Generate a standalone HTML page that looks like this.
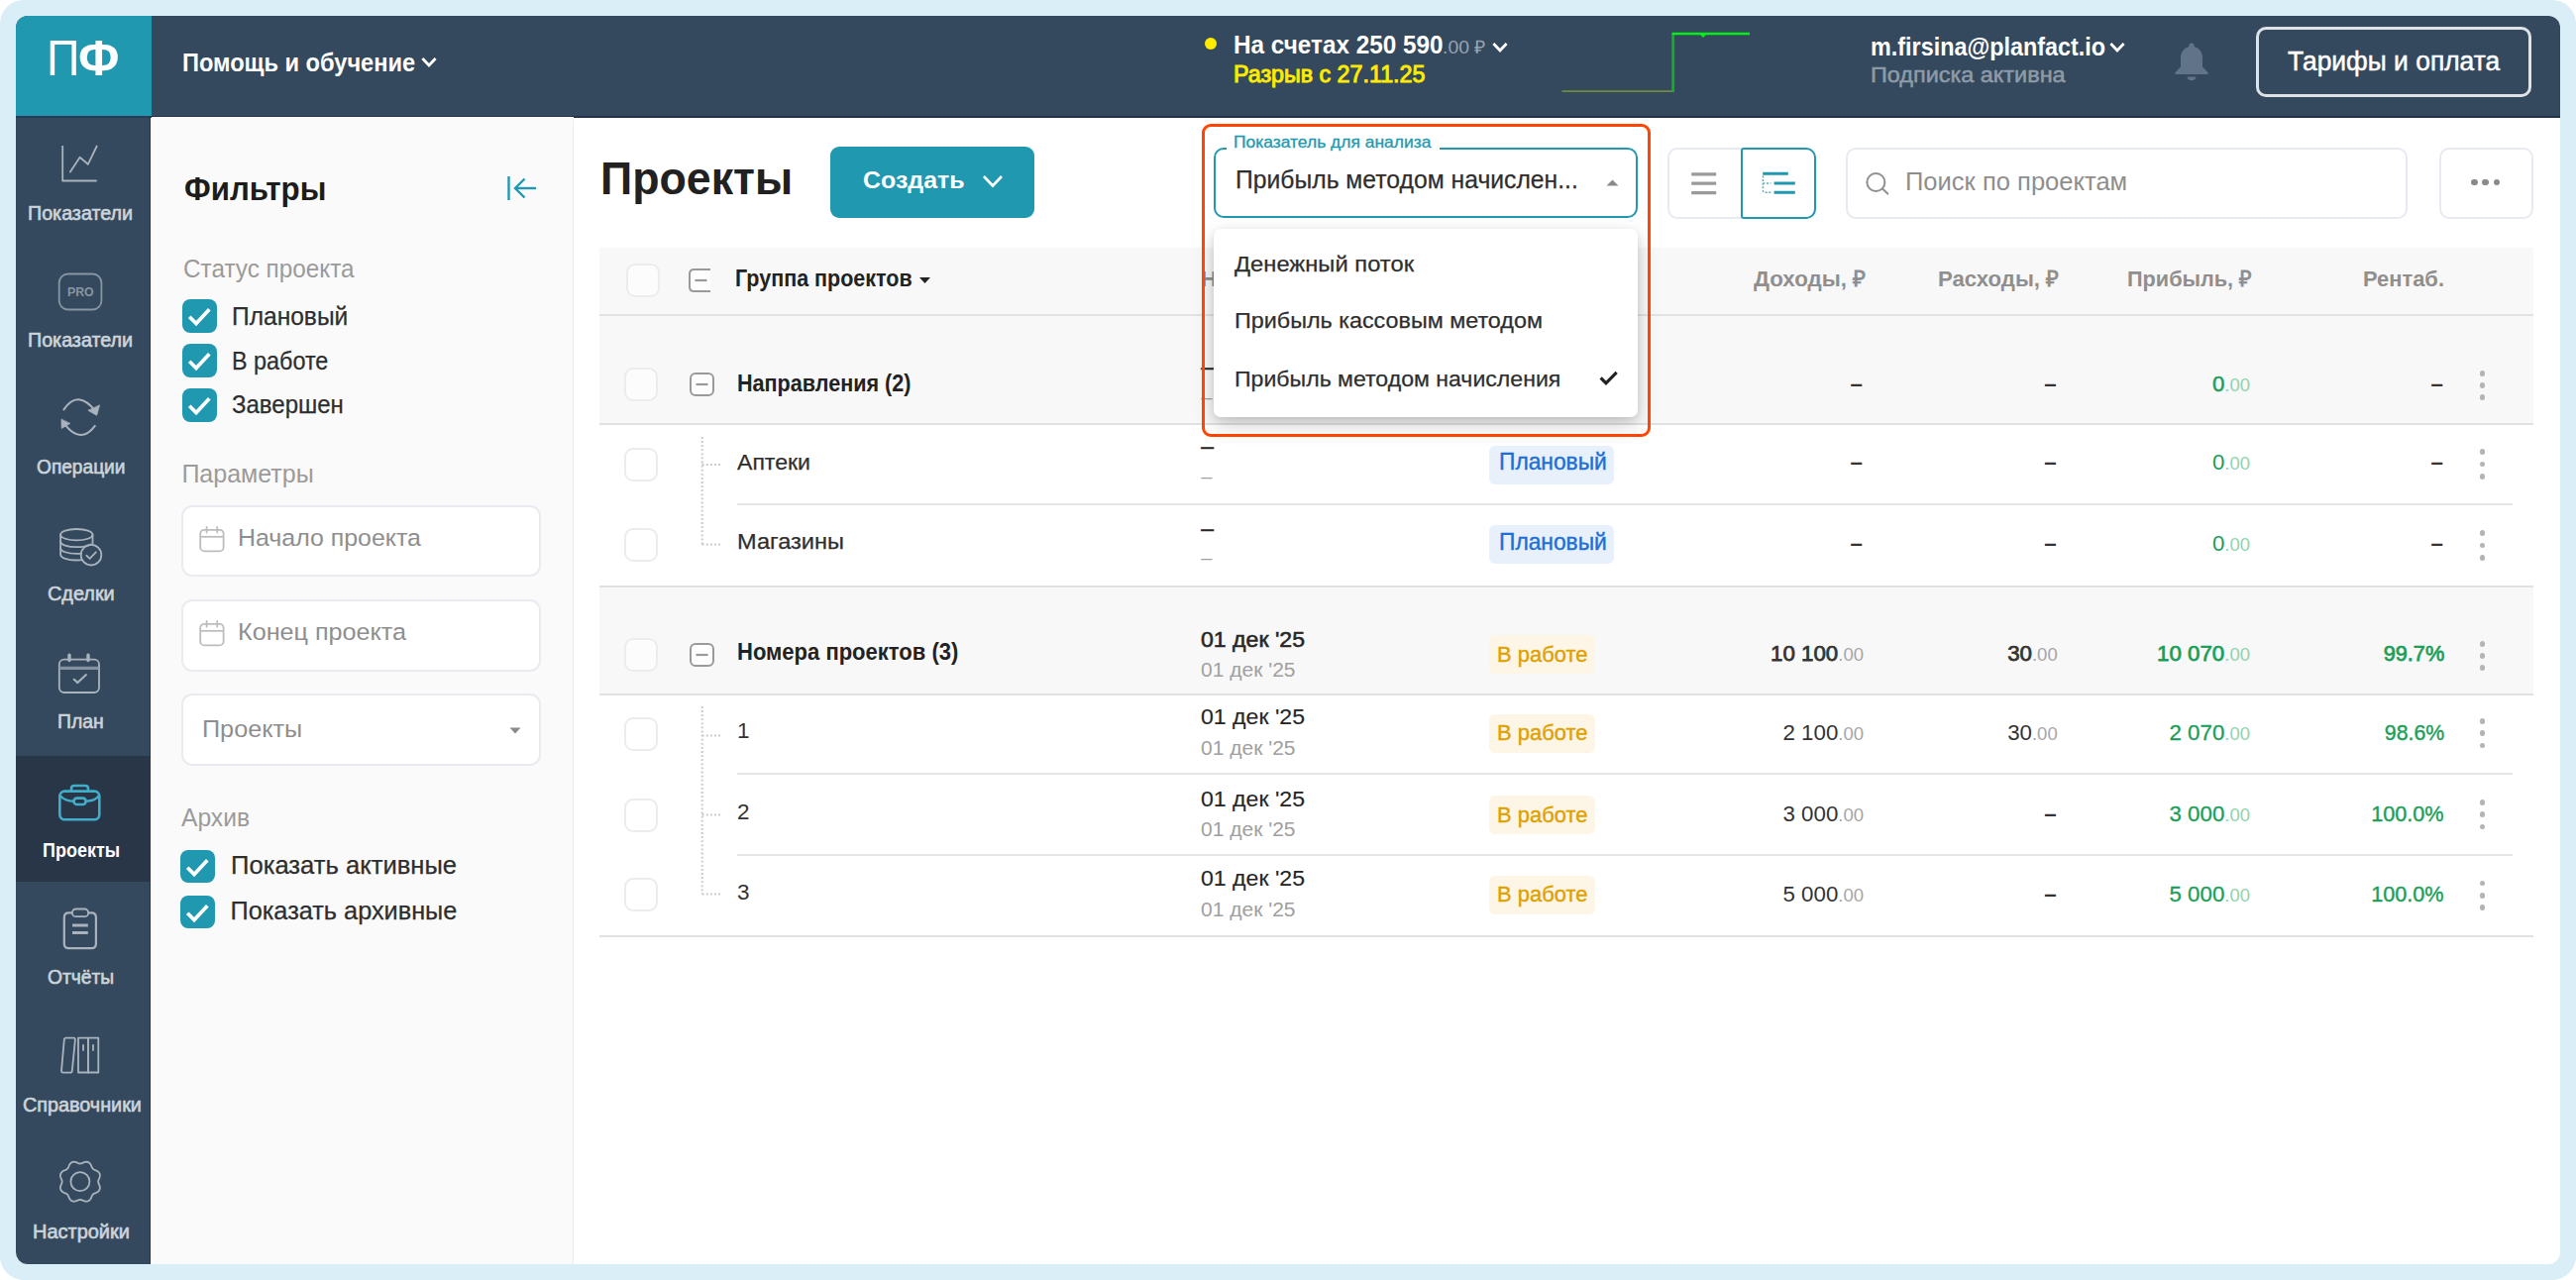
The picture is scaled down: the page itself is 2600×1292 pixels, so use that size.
<!DOCTYPE html>
<html lang="ru"><head><meta charset="utf-8"><title>Проекты</title>
<style>
*{box-sizing:border-box;margin:0;padding:0}
html,body{width:2600px;height:1292px;overflow:hidden;background:#fff}
body{font-family:"Liberation Sans",sans-serif;position:relative}
.t{position:absolute;white-space:nowrap;line-height:1;display:block}
.b{position:absolute}
svg{position:absolute;overflow:visible}
#frame{position:absolute;left:0;top:0;width:2600px;height:1292px;background:#d9eef6;border-radius:24px}
#app{position:absolute;left:16px;top:16px;width:2568px;height:1260px;background:#fff;border-radius:12px}
.cb{position:absolute;width:33px;height:33px;border-radius:9px;background:rgba(255,255,255,.55);border:2px solid #ececec}
.cbk{position:absolute;width:34px;height:33px;border-radius:8px;background:#2098b0}
.ln{position:absolute;height:2px;background:#e6e6e6}
</style></head>
<body>
<div id="frame"></div><div id="app"></div>
<div class="b" style="left:16.0px;top:16.0px;width:2568.0px;height:103.0px;background:#34495e;border-radius:12px 12px 0 0"></div>
<div class="b" style="left:152.0px;top:116.9px;width:2432.0px;height:2.1px;background:#233349"></div>
<div class="b" style="left:16.0px;top:16.0px;width:136.5px;height:101.2px;background:#1f98b0;border-radius:12px 0 0 0"></div>
<span class="t" style="top:33.5px;font-size:50.5px;color:#fff;left:47.3px;transform:scaleX(0.923);transform-origin:0 0;">П</span>
<span class="t" style="top:33.5px;font-size:50.5px;color:#fff;font-weight:700;left:79.3px;transform:scaleX(0.963);transform-origin:0 0;">Ф</span>
<span class="t" style="top:49.5px;font-size:26.3px;color:#fff;font-weight:700;left:183.5px;transform:scaleX(0.897);transform-origin:0 0;">Помощь и обучение</span>
<svg style="left:424.400px;top:57.200px" width="18" height="12" viewBox="0 0 18 12"><path d="M2.400 2 L9 9 L15.600 2" fill="none" stroke="#fff" stroke-width="2.800"/></svg>
<div class="b" style="left:1216.3px;top:38.0px;width:12.0px;height:12.0px;background:#ffeb00;border-radius:50%"></div>
<span class="t" style="top:31.8px;font-size:26.5px;color:#fff;font-weight:700;left:1244.5px;transform:scaleX(0.917);transform-origin:0 0;">На счетах 250 590</span>
<span class="t" style="top:38.5px;font-size:18.5px;color:#97a4b1;left:1456.0px;transform:scaleX(1.051);transform-origin:0 0;">.00 ₽</span>
<svg style="left:1505.400px;top:41.800px" width="18" height="12" viewBox="0 0 18 12"><path d="M2.400 2 L9 9 L15.600 2" fill="none" stroke="#fff" stroke-width="2.800"/></svg>
<span class="t" style="top:63.7px;font-size:23px;color:#ffeb00;-webkit-text-stroke:0.95px #ffeb00;left:1244.5px;transform:scaleX(1.011);transform-origin:0 0;">Разрыв с 27.11.25</span>
<svg style="left:0;top:0" width="2600" height="130" viewBox="0 0 2600 130"><path d="M1576.5 92.200 H1688" stroke="#6f8c3d" stroke-width="1.800" fill="none"/><path d="M1688.700 93 V35" stroke="#16ad2c" stroke-width="2.800" fill="none"/><path d="M1687.400 34 H1766" stroke="#06ee18" stroke-width="2.500" fill="none"/><path d="M1716 35 l3 3 l3 -3 z" fill="#0be31c"/></svg>
<span class="t" style="top:33.9px;font-size:26px;color:#fff;font-weight:700;left:1887.9px;transform:scaleX(0.899);transform-origin:0 0;">m.firsina@planfact.io</span>
<svg style="left:2128.300px;top:42px" width="18" height="12" viewBox="0 0 18 12"><path d="M2.400 2 L9 9 L15.600 2" fill="none" stroke="#fff" stroke-width="2.800"/></svg>
<span class="t" style="top:64.6px;font-size:22px;color:#8f9ba8;-webkit-text-stroke:0.5px #8f9ba8;left:1887.9px;transform:scaleX(1.065);transform-origin:0 0;">Подписка активна</span>
<svg style="left:2194px;top:42px" width="36" height="40" viewBox="0 0 36 40"><path d="M18 1.5c-1.6 0-2.6 1.2-2.6 2.6v.9C10.300 6.400 7 10.600 7 16v9.500L1.5 31v2h33v-2L29 25.500V16c0-5.400-3.300-9.600-8.400-11v-.9c0-1.400-1-2.600-2.600-2.600z" fill="#617388"/><path d="M13.500 35.500h9c0 2.300-2 3.800-4.500 3.800s-4.500-1.500-4.500-3.800z" fill="#617388"/></svg>
<div class="b" style="left:2277.0px;top:27.0px;width:278.0px;height:71.0px;border:3px solid #dfe3e7;border-radius:10px"></div>
<span class="t" style="top:48.7px;font-size:27px;color:#fff;-webkit-text-stroke:0.5px #fff;left:2309.3px;transform:scaleX(0.978);transform-origin:0 0;">Тарифы и оплата</span>
<div class="b" style="left:16.0px;top:117.2px;width:136.3px;height:1158.8px;background:#34495e;border-radius:0 0 0 12px"></div>
<div class="b" style="left:16.0px;top:117.2px;width:136.3px;height:1.4px;background:#2b3a52"></div>
<div class="b" style="left:151.2px;top:118.6px;width:1.1px;height:1157.4px;background:#243650"></div>
<div class="b" style="left:16.0px;top:762.5px;width:136.3px;height:127.5px;background:#283648"></div>
<svg style="left:0;top:0" width="160" height="1292" viewBox="0 0 160 1292" fill="none" stroke="#a9b3bd" stroke-width="1.8" stroke-linecap="round" stroke-linejoin="round"><path d="M63.200 147 V182.500 H97.700" stroke-linecap="butt"/><path d="M70.900 173.500 L80.600 158.700 L88.800 165.800 L97.700 147.500"/><rect x="59.7" y="276.5" width="42.7" height="36" rx="9" stroke="#8895a3"/><path d="M64.400 413.400 Q78.500 392.200 96.500 415.200" stroke-width="2"/><path d="M100.500 409.200 L97.600 419.300 L89.200 414.400 Z" fill="#a9b3bd" stroke-width="0.800"/><path d="M95.800 429.800 Q81.500 448.900 65.600 428.600" stroke-width="2"/><path d="M62 423.500 L62.200 432.400 L70.500 427.600 Z" fill="#a9b3bd" stroke-width="0.800"/><ellipse cx="77.300" cy="539.700" rx="16.200" ry="5.700"/><path d="M61.100 539.700 V559.800 C61.100 563 68 565.500 77.300 565.500 C79.300 565.500 81.200 565.400 82.800 565.200"/><path d="M93.500 539.700 V548.800"/><path d="M61.100 546.500 C61.100 549.700 68 552.200 77.300 552.200 C83.500 552.200 88.800 551.100 91.600 549.500"/><path d="M61.100 553.200 C61.100 556.400 68 558.900 77.300 558.900 C79 558.900 80.600 558.800 82 558.700"/><circle cx="92" cy="560.200" r="10.300"/><path d="M87.300 560.600 L90.600 563.800 L96.800 557.300"/><rect x="59.800" y="665.700" width="40.200" height="33.300" rx="5"/><path d="M60.500 674.300 H99.300" stroke-linecap="butt" stroke-width="3.200" stroke="#8592a0"/><path d="M70 661.300 V666.500 M89 661.300 V666.500" stroke-width="3.400"/><path d="M74.700 685.800 L78.400 689.100 L86.900 681.100" stroke-width="2.100"/></svg>
<svg style="left:0;top:0" width="160" height="1292" viewBox="0 0 160 1292" fill="none" stroke="#41adc8" stroke-width="2.6" stroke-linecap="round" stroke-linejoin="round"><rect x="60.300" y="798.600" width="40" height="28.600" rx="5"/><path d="M72 798.600 V796 C72 794 73.500 793 75 793 H86 C87.500 793 89 794 89 796 V798.600"/><path d="M60.500 803 C64 807 70 808.700 74.500 808.700 M86.700 808.700 C91 808.700 97 807 100.100 803"/><rect x="74.500" y="805.600" width="12.200" height="6.400" rx="3.200"/></svg>
<svg style="left:0;top:0" width="160" height="1292" viewBox="0 0 160 1292" fill="none" stroke="#a9b3bd" stroke-width="1.8" stroke-linecap="round" stroke-linejoin="round"><path d="M72.500 921.300 H69.400 C66.500 921.300 64.800 923.300 64.800 926 V952.500 C64.800 955.200 66.500 957.200 69.400 957.200 H92.300 C95.200 957.200 96.900 955.200 96.900 952.500 V926 C96.900 923.300 95.200 921.300 92.300 921.300 H89.500" stroke-width="2.200"/><rect x="72.900" y="917.500" width="16.300" height="7.700" rx="3.800"/><path d="M73 934 H88.800 M73 941.500 H88.800" stroke-width="2.800" stroke-linecap="butt"/><path d="M66.800 1047.600 Q65 1047.600 64.800 1049.500 L62 1080.800 Q61.900 1082.600 63.800 1082.600 H70.800 Q72.600 1082.600 72.800 1080.800 L75.900 1049.500 Q76 1047.600 74.200 1047.600 Z"/><rect x="79" y="1047.600" width="9.900" height="34.900"/><rect x="88.900" y="1047.600" width="10.400" height="34.900"/><path d="M84 1055 V1060 M94 1055 V1060"/><path d="M100.5 1200.8 L99.8 1202.0 L98.7 1203.0 L97.4 1203.8 L96.0 1204.3 L94.8 1204.9 L93.8 1205.6 L93.1 1206.6 L92.5 1207.8 L92.0 1209.2 L91.2 1210.5 L90.2 1211.6 L89.0 1212.3 L87.7 1212.7 L86.2 1212.6 L84.8 1212.2 L83.4 1211.6 L82.1 1211.1 L80.9 1210.9 L79.7 1211.1 L78.4 1211.6 L77.0 1212.2 L75.6 1212.6 L74.1 1212.7 L72.8 1212.3 L71.6 1211.6 L70.6 1210.5 L69.8 1209.2 L69.3 1207.8 L68.7 1206.6 L68.0 1205.6 L67.0 1204.9 L65.8 1204.3 L64.4 1203.8 L63.1 1203.0 L62.0 1202.0 L61.3 1200.8 L60.9 1199.5 L61.0 1198.0 L61.4 1196.6 L62.0 1195.2 L62.5 1193.9 L62.7 1192.7 L62.5 1191.5 L62.0 1190.2 L61.4 1188.8 L61.0 1187.4 L60.9 1185.9 L61.3 1184.6 L62.0 1183.4 L63.1 1182.4 L64.4 1181.6 L65.8 1181.1 L67.0 1180.5 L68.0 1179.8 L68.7 1178.8 L69.3 1177.6 L69.8 1176.2 L70.6 1174.9 L71.6 1173.8 L72.8 1173.1 L74.1 1172.7 L75.6 1172.8 L77.0 1173.2 L78.4 1173.8 L79.7 1174.3 L80.9 1174.5 L82.1 1174.3 L83.4 1173.8 L84.8 1173.2 L86.2 1172.8 L87.7 1172.7 L89.0 1173.1 L90.2 1173.8 L91.2 1174.9 L92.0 1176.2 L92.5 1177.6 L93.1 1178.8 L93.8 1179.8 L94.8 1180.5 L96.0 1181.1 L97.4 1181.6 L98.7 1182.4 L99.8 1183.4 L100.5 1184.6 L100.9 1185.9 L100.8 1187.4 L100.4 1188.8 L99.8 1190.2 L99.3 1191.5 L99.1 1192.7 L99.3 1193.9 L99.8 1195.2 L100.4 1196.6 L100.8 1198.0 L100.9 1199.5 L100.5 1200.8 Z"/><circle cx="80.900" cy="1192.700" r="9.500"/></svg>
<span class="t" style="top:288.3px;font-size:13px;color:#8895a3;font-weight:700;left:67.8px;transform:scaleX(0.948);transform-origin:0 0;">PRO</span>
<span class="t" style="top:205.7px;font-size:19.3px;color:#cdd4da;-webkit-text-stroke:0.6px #cdd4da;left:28.4px;transform:scaleX(1.021);transform-origin:0 0;">Показатели</span>
<span class="t" style="top:333.7px;font-size:19.3px;color:#cdd4da;-webkit-text-stroke:0.6px #cdd4da;left:28.4px;transform:scaleX(1.021);transform-origin:0 0;">Показатели</span>
<span class="t" style="top:461.7px;font-size:19.3px;color:#cdd4da;-webkit-text-stroke:0.6px #cdd4da;left:36.7px;transform:scaleX(0.992);transform-origin:0 0;">Операции</span>
<span class="t" style="top:590.4px;font-size:19.3px;color:#cdd4da;-webkit-text-stroke:0.6px #cdd4da;left:47.9px;transform:scaleX(1.030);transform-origin:0 0;">Сделки</span>
<span class="t" style="top:718.7px;font-size:19.3px;color:#cdd4da;-webkit-text-stroke:0.6px #cdd4da;left:58.1px;transform:scaleX(1.005);transform-origin:0 0;">План</span>
<span class="t" style="top:977.4px;font-size:19.3px;color:#cdd4da;-webkit-text-stroke:0.6px #cdd4da;left:47.9px;">Отчёты</span>
<span class="t" style="top:1105.5px;font-size:19.3px;color:#cdd4da;-webkit-text-stroke:0.6px #cdd4da;left:22.5px;transform:scaleX(1.026);transform-origin:0 0;">Справочники</span>
<span class="t" style="top:1233.7px;font-size:19.3px;color:#cdd4da;-webkit-text-stroke:0.6px #cdd4da;left:32.5px;transform:scaleX(1.035);transform-origin:0 0;">Настройки</span>
<span class="t" style="top:848.9px;font-size:19.3px;color:#fff;font-weight:700;left:43.4px;transform:scaleX(0.933);transform-origin:0 0;">Проекты</span>
<div class="b" style="left:152.5px;top:117.5px;width:426.5px;height:1158.5px;background:#fafafa"></div>
<div class="b" style="left:577.5px;top:121.0px;width:1.5px;height:1155.0px;background:#ececec"></div>
<span class="t" style="top:173.6px;font-size:33.6px;color:#1c1c1c;font-weight:700;left:186.2px;transform:scaleX(0.931);transform-origin:0 0;">Фильтры</span>
<svg style="left:510px;top:176px" width="34" height="28" viewBox="0 0 34 28" fill="none" stroke="#2098b0" stroke-width="2.400"><path d="M3.500 2 V26"/><path d="M10 14 H31"/><path d="M19.500 4.500 L10 14 L19.500 23.500"/></svg>
<span class="t" style="top:258.6px;font-size:25px;color:#9b9b9b;left:185.0px;transform:scaleX(0.972);transform-origin:0 0;">Статус проекта</span>
<div class="cbk" style="left:184.2px;top:302.2px;width:35px;height:33.4px"></div><svg style="left:184.2px;top:302.2px" width="35" height="33.4" viewBox="0 0 35 33.400"><path d="M7.200 17.800 L14 24.600 L27.300 10.200" fill="none" stroke="#fff" stroke-width="3.700" stroke-linecap="butt" stroke-linejoin="miter"/></svg>
<span class="t" style="top:306.9px;font-size:25.3px;color:#2e2e2e;-webkit-text-stroke:0.25px #2e2e2e;left:233.7px;transform:scaleX(0.971);transform-origin:0 0;">Плановый</span>
<div class="cbk" style="left:184.2px;top:347.3px;width:35px;height:33.4px"></div><svg style="left:184.2px;top:347.3px" width="35" height="33.4" viewBox="0 0 35 33.400"><path d="M7.200 17.800 L14 24.600 L27.300 10.200" fill="none" stroke="#fff" stroke-width="3.700" stroke-linecap="butt" stroke-linejoin="miter"/></svg>
<span class="t" style="top:352.4px;font-size:25.3px;color:#2e2e2e;-webkit-text-stroke:0.25px #2e2e2e;left:233.7px;transform:scaleX(0.923);transform-origin:0 0;">В работе</span>
<div class="cbk" style="left:184.2px;top:392.4px;width:35px;height:33.4px"></div><svg style="left:184.2px;top:392.4px" width="35" height="33.4" viewBox="0 0 35 33.400"><path d="M7.200 17.800 L14 24.600 L27.300 10.200" fill="none" stroke="#fff" stroke-width="3.700" stroke-linecap="butt" stroke-linejoin="miter"/></svg>
<span class="t" style="top:396.2px;font-size:25.3px;color:#2e2e2e;-webkit-text-stroke:0.25px #2e2e2e;left:233.7px;transform:scaleX(0.948);transform-origin:0 0;">Завершен</span>
<span class="t" style="top:465.8px;font-size:25px;color:#9b9b9b;left:183.4px;">Параметры</span>
<div class="b" style="left:182.5px;top:509.8px;width:363.5px;height:71.8px;background:#fff;border:2.300px solid #e9ebf0;border-radius:11px"></div>
<svg style="left:200.5px;top:531.3px" width="26" height="27" viewBox="0 0 26 27" fill="none" stroke="#bdbdbd" stroke-width="1.800" stroke-linecap="round"><rect x="1.200" y="3.800" width="23.400" height="21.600" rx="4"/><path d="M1.200 10.800 H24.600" stroke-linecap="butt"/><path d="M7.600 1 V6.500 M18.200 1 V6.500"/></svg>
<span class="t" style="top:531.2px;font-size:24.5px;color:#8e8e8e;left:240.0px;transform:scaleX(1.017);transform-origin:0 0;">Начало проекта</span>
<div class="b" style="left:182.5px;top:604.8px;width:363.5px;height:73.0px;background:#fff;border:2.300px solid #e9ebf0;border-radius:11px"></div>
<svg style="left:200.5px;top:626.0px" width="26" height="27" viewBox="0 0 26 27" fill="none" stroke="#bdbdbd" stroke-width="1.800" stroke-linecap="round"><rect x="1.200" y="3.800" width="23.400" height="21.600" rx="4"/><path d="M1.200 10.800 H24.600" stroke-linecap="butt"/><path d="M7.600 1 V6.500 M18.200 1 V6.500"/></svg>
<span class="t" style="top:626.2px;font-size:24.5px;color:#8e8e8e;left:240.0px;transform:scaleX(1.027);transform-origin:0 0;">Конец проекта</span>
<div class="b" style="left:182.5px;top:700.0px;width:363.5px;height:73.0px;background:#fff;border:2.300px solid #e9ebf0;border-radius:11px"></div>
<span class="t" style="top:723.8px;font-size:24.5px;color:#8e8e8e;left:204.4px;transform:scaleX(1.029);transform-origin:0 0;">Проекты</span>
<svg style="left:513.500px;top:733.500px" width="12" height="7" viewBox="0 0 12 7"><path d="M0.500 0.500 H11.500 L6 6.500 Z" fill="#8a8a8a"/></svg>
<span class="t" style="top:813.1px;font-size:25px;color:#9b9b9b;left:183.0px;transform:scaleX(0.985);transform-origin:0 0;">Архив</span>
<div class="cbk" style="left:182.0px;top:858.0px;width:35px;height:33.4px"></div><svg style="left:182.0px;top:858.0px" width="35" height="33.4" viewBox="0 0 35 33.400"><path d="M7.200 17.800 L14 24.600 L27.300 10.200" fill="none" stroke="#fff" stroke-width="3.700" stroke-linecap="butt" stroke-linejoin="miter"/></svg>
<span class="t" style="top:860.6px;font-size:25.3px;color:#2e2e2e;-webkit-text-stroke:0.25px #2e2e2e;left:232.5px;transform:scaleX(1.012);transform-origin:0 0;">Показать активные</span>
<div class="cbk" style="left:182.0px;top:903.7px;width:35px;height:33.4px"></div><svg style="left:182.0px;top:903.7px" width="35" height="33.4" viewBox="0 0 35 33.400"><path d="M7.200 17.800 L14 24.600 L27.300 10.200" fill="none" stroke="#fff" stroke-width="3.700" stroke-linecap="butt" stroke-linejoin="miter"/></svg>
<span class="t" style="top:906.6px;font-size:25.3px;color:#2e2e2e;-webkit-text-stroke:0.25px #2e2e2e;left:232.5px;">Показать архивные</span>
<span class="t" style="top:156.9px;font-size:46px;color:#212121;font-weight:700;left:606.0px;transform:scaleX(0.972);transform-origin:0 0;">Проекты</span>
<div class="b" style="left:838.0px;top:148.0px;width:206.0px;height:72.0px;background:#2098b0;border-radius:9px"></div>
<span class="t" style="top:169.5px;font-size:24.5px;color:#fff;font-weight:700;left:871.4px;transform:scaleX(1.018);transform-origin:0 0;">Создать</span>
<svg style="left:990px;top:175px" width="24" height="16" viewBox="0 0 24 16"><path d="M3 3 L12 12.500 L21 3" fill="none" stroke="#fff" stroke-width="2.600"/></svg>
<div class="b" style="left:1682.5px;top:148.5px;width:150.5px;height:72.3px;border:2px solid #e7eaf0;border-radius:10px;background:#fff"></div>
<svg style="left:1700px;top:165px" width="40" height="40" viewBox="0 0 40 40" stroke="#9a9a9a" stroke-width="3.200"><path d="M7.200 10.900 H32.200 M7.200 20.100 H32.200 M7.200 29.700 H32.200"/></svg>
<div class="b" style="left:1757.2px;top:148.5px;width:75.8px;height:72.0px;border:2.600px solid #2098b0;border-radius:3px 10px 10px 3px;background:#fff"></div>
<svg style="left:1770px;top:165px" width="50" height="40" viewBox="0 0 50 40" fill="none" stroke="#2098b0" stroke-width="3"><path d="M9.200 10.300 H34.800 M20.600 19.900 H41.800 M20.600 29.300 H41.800"/><path d="M9.400 12.500 V27 Q9.400 29.300 12 29.300 H17.500 M9.400 19.900 H17.500" stroke-width="1.500" stroke-dasharray="2 1.600" stroke="#55aec2"/></svg>
<div class="b" style="left:1863.2px;top:148.5px;width:567.3px;height:72.3px;border:2px solid #e7eaf0;border-radius:10px;background:#fff"></div>
<svg style="left:1880px;top:170px" width="30" height="30" viewBox="0 0 30 30" fill="none" stroke="#8f8f8f" stroke-width="2"><circle cx="13.400" cy="14" r="9"/><path d="M20 20.600 L25.300 25.600" stroke-linecap="round"/></svg>
<span class="t" style="top:170.8px;font-size:25px;color:#8e8e8e;left:1922.9px;transform:scaleX(1.022);transform-origin:0 0;">Поиск по проектам</span>
<div class="b" style="left:2462.3px;top:148.5px;width:94.5px;height:72.3px;border:2px solid #e7eaf0;border-radius:10px;background:#fff"></div>
<div class="b" style="left:2494.2px;top:180.9px;width:6.6px;height:6.6px;background:#8a8a8a;border-radius:50%"></div>
<div class="b" style="left:2505.4px;top:180.9px;width:6.6px;height:6.6px;background:#8a8a8a;border-radius:50%"></div>
<div class="b" style="left:2516.6px;top:180.9px;width:6.6px;height:6.6px;background:#8a8a8a;border-radius:50%"></div>
<div class="b" style="left:605.0px;top:249.5px;width:1951.7px;height:68.0px;background:#f8f8f8"></div>
<div class="b" style="left:605.0px;top:317.0px;width:1951.7px;height:1.8px;background:#e2e2e2"></div>
<div class="cb" style="left:631.5px;top:265.8px;width:34px;height:34px"></div>
<svg style="left:694.5px;top:270.5px" width="25" height="24" viewBox="0 0 25 24" fill="none" stroke="#9a9a9a" stroke-width="2"><path d="M22 1 H5.500 Q1 1 1 5.500 V18.500 Q1 23 5.500 23 H22" fill="#fdfdfd"/><path d="M6.500 12 H18.500" stroke-width="2.200"/></svg>
<span class="t" style="top:270.2px;font-size:23px;color:#222;font-weight:700;left:742.0px;transform:scaleX(0.935);transform-origin:0 0;">Группа проектов</span>
<svg style="left:927.500px;top:279.500px" width="11" height="6" viewBox="0 0 11 6"><path d="M0 0 H11 L5.500 6 Z" fill="#222"/></svg>
<span class="t" style="top:271.4px;font-size:22.5px;color:#8f8f8f;font-weight:700;left:1212.0px;">Начало / Конец</span>
<span class="t" style="top:271.4px;font-size:22.5px;color:#8f8f8f;font-weight:700;left:1503.0px;">Статус</span>
<span class="t" style="top:271.4px;font-size:22.5px;color:#8f8f8f;font-weight:700;left:1769.9px;transform:scaleX(0.993);transform-origin:0 0;">Доходы, ₽</span>
<span class="t" style="top:271.4px;font-size:22.5px;color:#8f8f8f;font-weight:700;left:1956.0px;transform:scaleX(0.985);transform-origin:0 0;">Расходы, ₽</span>
<span class="t" style="top:271.4px;font-size:22.5px;color:#8f8f8f;font-weight:700;left:2146.8px;transform:scaleX(0.963);transform-origin:0 0;">Прибыль, ₽</span>
<span class="t" style="top:271.4px;font-size:22.5px;color:#8f8f8f;font-weight:700;left:2385.0px;transform:scaleX(0.973);transform-origin:0 0;">Рентаб.</span>
<div class="b" style="left:605.0px;top:318.8px;width:1951.7px;height:108.7px;background:#f8f8f8"></div>
<div class="b" style="left:605.0px;top:592.5px;width:1951.7px;height:107.5px;background:#f8f8f8"></div>
<div class="b" style="left:605.0px;top:427.2px;width:1951.7px;height:2.2px;background:#e1e1e1"></div>
<div class="b" style="left:744.0px;top:508.2px;width:1792.0px;height:1.8px;background:#e5e5e5"></div>
<div class="b" style="left:605.0px;top:590.5px;width:1951.7px;height:2.2px;background:#e1e1e1"></div>
<div class="b" style="left:605.0px;top:699.8px;width:1951.7px;height:2.2px;background:#e1e1e1"></div>
<div class="b" style="left:744.0px;top:779.8px;width:1792.0px;height:1.8px;background:#e5e5e5"></div>
<div class="b" style="left:744.0px;top:861.9px;width:1792.0px;height:1.8px;background:#e5e5e5"></div>
<div class="b" style="left:605.0px;top:944.0px;width:1951.7px;height:2.2px;background:#e1e1e1"></div>
<svg style="left:0;top:0" width="800" height="1000" viewBox="0 0 800 1000" fill="none" stroke="#c6c6c6" stroke-width="2" stroke-dasharray="1.800 2.300"><path d="M708.700 441 V549.600 M708.700 469 H728 M708.700 549.600 H728"/><path d="M708.700 713 V902.500 M708.700 742.500 H728 M708.700 822.500 H728 M708.700 902.500 H728"/></svg>
<div class="cb" style="left:629.5px;top:370.8px;width:34px;height:34px"></div>
<svg style="left:695.5px;top:375.8px" width="25" height="24" viewBox="0 0 25 24" fill="none" stroke="#9a9a9a" stroke-width="2"><rect x="1" y="1" width="23" height="22" rx="5" fill="#fdfdfd"/><path d="M6.500 12 H18.500" stroke-width="2.200"/></svg>
<span class="t" style="top:375.7px;font-size:23px;color:#222;font-weight:700;left:744.0px;transform:scaleX(0.938);transform-origin:0 0;">Направления (2)</span>
<span class="t" style="top:359.0px;font-size:22.8px;color:#262626;-webkit-text-stroke:0.5px #262626;left:1212.2px;">–</span><span class="t" style="top:390.7px;font-size:20px;color:#a0a0a0;left:1212.2px;">–</span>
<span class="t" style="top:377.1px;font-size:22.3px;color:#333;font-weight:700;right:720.0px;">–</span>
<span class="t" style="top:377.1px;font-size:22.3px;color:#333;font-weight:700;right:524.3px;">–</span>
<span class="t" style="top:377.1px;right:329.0px;font-size:22.3px;color:#1a9e58;"><span style="-webkit-text-stroke:0.5px #1a9e58;">0</span><span style="font-size:18.5px;font-weight:400;color:#8fd3ae">.00</span></span>
<span class="t" style="top:377.1px;font-size:22.3px;color:#333;font-weight:700;right:134.0px;">–</span>
<div class="b" style="left:2502.5px;top:373.8px;width:5.8px;height:5.8px;background:#b4b4b4;border-radius:50%"></div><div class="b" style="left:2502.5px;top:386.1px;width:5.8px;height:5.8px;background:#b4b4b4;border-radius:50%"></div><div class="b" style="left:2502.5px;top:398.4px;width:5.8px;height:5.8px;background:#b4b4b4;border-radius:50%"></div>
<div class="cb" style="left:629.5px;top:451.8px;width:34px;height:34px"></div>
<span class="t" style="top:456.2px;font-size:22.5px;color:#2e2e2e;-webkit-text-stroke:0.25px #2e2e2e;left:744.0px;transform:scaleX(1.025);transform-origin:0 0;">Аптеки</span>
<span class="t" style="top:439.3px;font-size:22.8px;color:#262626;-webkit-text-stroke:0.5px #262626;left:1212.2px;">–</span><span class="t" style="top:470.5px;font-size:20px;color:#a0a0a0;left:1212.2px;">–</span>
<div class="b" style="left:1503.3px;top:449.7px;width:125.7px;height:39.3px;background:#e8f0fb;border-radius:6px"></div><span class="t" style="top:455.0px;font-size:23.2px;color:#1d6fd6;-webkit-text-stroke:0.4px #1d6fd6;left:1512.5px;transform:scaleX(0.983);transform-origin:0 0;">Плановый</span>
<span class="t" style="top:455.8px;font-size:22.3px;color:#333;font-weight:700;right:720.0px;">–</span>
<span class="t" style="top:455.8px;font-size:22.3px;color:#333;font-weight:700;right:524.3px;">–</span>
<span class="t" style="top:455.8px;right:329.0px;font-size:22.3px;color:#1a9e58;"><span style="">0</span><span style="font-size:18.5px;font-weight:400;color:#8fd3ae">.00</span></span>
<span class="t" style="top:455.8px;font-size:22.3px;color:#333;font-weight:700;right:134.0px;">–</span>
<div class="b" style="left:2502.5px;top:453.3px;width:5.8px;height:5.8px;background:#b4b4b4;border-radius:50%"></div><div class="b" style="left:2502.5px;top:465.6px;width:5.8px;height:5.8px;background:#b4b4b4;border-radius:50%"></div><div class="b" style="left:2502.5px;top:477.9px;width:5.8px;height:5.8px;background:#b4b4b4;border-radius:50%"></div>
<div class="cb" style="left:629.5px;top:532.8px;width:34px;height:34px"></div>
<span class="t" style="top:536.2px;font-size:22.5px;color:#2e2e2e;-webkit-text-stroke:0.25px #2e2e2e;left:744.0px;transform:scaleX(1.049);transform-origin:0 0;">Магазины</span>
<span class="t" style="top:521.8px;font-size:22.8px;color:#262626;-webkit-text-stroke:0.5px #262626;left:1212.2px;">–</span><span class="t" style="top:552.5px;font-size:20px;color:#a0a0a0;left:1212.2px;">–</span>
<div class="b" style="left:1503.3px;top:530.2px;width:125.7px;height:39.3px;background:#e8f0fb;border-radius:6px"></div><span class="t" style="top:535.5px;font-size:23.2px;color:#1d6fd6;-webkit-text-stroke:0.4px #1d6fd6;left:1512.5px;transform:scaleX(0.983);transform-origin:0 0;">Плановый</span>
<span class="t" style="top:537.9px;font-size:22.3px;color:#333;font-weight:700;right:720.0px;">–</span>
<span class="t" style="top:537.9px;font-size:22.3px;color:#333;font-weight:700;right:524.3px;">–</span>
<span class="t" style="top:537.9px;right:329.0px;font-size:22.3px;color:#1a9e58;"><span style="">0</span><span style="font-size:18.5px;font-weight:400;color:#8fd3ae">.00</span></span>
<span class="t" style="top:537.9px;font-size:22.3px;color:#333;font-weight:700;right:134.0px;">–</span>
<div class="b" style="left:2502.5px;top:535.4px;width:5.8px;height:5.8px;background:#b4b4b4;border-radius:50%"></div><div class="b" style="left:2502.5px;top:547.7px;width:5.8px;height:5.8px;background:#b4b4b4;border-radius:50%"></div><div class="b" style="left:2502.5px;top:560.0px;width:5.8px;height:5.8px;background:#b4b4b4;border-radius:50%"></div>
<div class="cb" style="left:629.5px;top:644.3px;width:34px;height:34px"></div>
<svg style="left:695.5px;top:649.3px" width="25" height="24" viewBox="0 0 25 24" fill="none" stroke="#9a9a9a" stroke-width="2"><rect x="1" y="1" width="23" height="22" rx="5" fill="#fdfdfd"/><path d="M6.500 12 H18.500" stroke-width="2.200"/></svg>
<span class="t" style="top:646.7px;font-size:23px;color:#222;font-weight:700;left:743.5px;transform:scaleX(0.957);transform-origin:0 0;">Номера проектов (3)</span>
<span class="t" style="top:634.1px;font-size:22.8px;color:#262626;-webkit-text-stroke:0.55px #262626;left:1212.0px;transform:scaleX(1.013);transform-origin:0 0;">01 дек '25</span><span class="t" style="top:666.1px;font-size:20px;color:#a0a0a0;left:1212.0px;transform:scaleX(1.050);transform-origin:0 0;">01 дек '25</span>
<div class="b" style="left:1503.0px;top:640.8px;width:107.0px;height:39.2px;background:#fdf5e6;border-radius:6px"></div><span class="t" style="top:648.5px;font-size:22.8px;color:#e0a100;-webkit-text-stroke:0.4px #e0a100;left:1511.0px;transform:scaleX(0.963);transform-origin:0 0;">В работе</span>
<span class="t" style="top:649.3px;right:719.0px;font-size:22.3px;color:#333;"><span style="-webkit-text-stroke:0.75px #333;">10 100</span><span style="font-size:18.5px;font-weight:400;color:#a6a6a6">.00</span></span>
<span class="t" style="top:649.3px;right:523.3px;font-size:22.3px;color:#333;"><span style="-webkit-text-stroke:0.75px #333;">30</span><span style="font-size:18.5px;font-weight:400;color:#a6a6a6">.00</span></span>
<span class="t" style="top:649.3px;right:329.0px;font-size:22.3px;color:#1a9e58;"><span style="-webkit-text-stroke:0.75px #1a9e58;">10 070</span><span style="font-size:18.5px;font-weight:400;color:#8fd3ae">.00</span></span>
<span class="t" style="top:649.3px;font-size:22.3px;color:#1a9e58;-webkit-text-stroke:0.75px #1a9e58;right:133.0px;transform:scaleX(0.973);transform-origin:100% 0;">99.7%</span>
<div class="b" style="left:2502.5px;top:646.8px;width:5.8px;height:5.8px;background:#b4b4b4;border-radius:50%"></div><div class="b" style="left:2502.5px;top:659.1px;width:5.8px;height:5.8px;background:#b4b4b4;border-radius:50%"></div><div class="b" style="left:2502.5px;top:671.4px;width:5.8px;height:5.8px;background:#b4b4b4;border-radius:50%"></div>
<div class="cb" style="left:629.5px;top:724.1px;width:34px;height:34px"></div>
<span class="t" style="top:726.5px;font-size:22.5px;color:#333;left:744.0px;">1</span>
<span class="t" style="top:712.3px;font-size:22.8px;color:#262626;-webkit-text-stroke:0.15px #262626;left:1212.0px;transform:scaleX(1.013);transform-origin:0 0;">01 дек '25</span><span class="t" style="top:744.9px;font-size:20px;color:#a0a0a0;left:1212.0px;transform:scaleX(1.050);transform-origin:0 0;">01 дек '25</span>
<div class="b" style="left:1503.0px;top:720.6px;width:107.0px;height:39.2px;background:#fdf5e6;border-radius:6px"></div><span class="t" style="top:728.3px;font-size:22.8px;color:#e0a100;-webkit-text-stroke:0.4px #e0a100;left:1511.0px;transform:scaleX(0.963);transform-origin:0 0;">В работе</span>
<span class="t" style="top:728.7px;right:719.0px;font-size:22.3px;color:#333;"><span style="">2 100</span><span style="font-size:18.5px;font-weight:400;color:#a6a6a6">.00</span></span>
<span class="t" style="top:728.7px;right:523.3px;font-size:22.3px;color:#333;"><span style="">30</span><span style="font-size:18.5px;font-weight:400;color:#a6a6a6">.00</span></span>
<span class="t" style="top:728.7px;right:329.0px;font-size:22.3px;color:#1a9e58;"><span style="-webkit-text-stroke:0.3px #1a9e58;">2 070</span><span style="font-size:18.5px;font-weight:400;color:#8fd3ae">.00</span></span>
<span class="t" style="top:728.7px;font-size:22.3px;color:#1a9e58;-webkit-text-stroke:0.4px #1a9e58;right:133.0px;transform:scaleX(0.955);transform-origin:100% 0;">98.6%</span>
<div class="b" style="left:2502.5px;top:724.9px;width:5.8px;height:5.8px;background:#b4b4b4;border-radius:50%"></div><div class="b" style="left:2502.5px;top:737.2px;width:5.8px;height:5.8px;background:#b4b4b4;border-radius:50%"></div><div class="b" style="left:2502.5px;top:749.5px;width:5.8px;height:5.8px;background:#b4b4b4;border-radius:50%"></div>
<div class="cb" style="left:629.5px;top:805.6px;width:34px;height:34px"></div>
<span class="t" style="top:808.6px;font-size:22.5px;color:#333;left:744.0px;">2</span>
<span class="t" style="top:794.5px;font-size:22.8px;color:#262626;-webkit-text-stroke:0.15px #262626;left:1212.0px;transform:scaleX(1.013);transform-origin:0 0;">01 дек '25</span><span class="t" style="top:827.1px;font-size:20px;color:#a0a0a0;left:1212.0px;transform:scaleX(1.050);transform-origin:0 0;">01 дек '25</span>
<div class="b" style="left:1503.0px;top:802.8px;width:107.0px;height:39.2px;background:#fdf5e6;border-radius:6px"></div><span class="t" style="top:810.5px;font-size:22.8px;color:#e0a100;-webkit-text-stroke:0.4px #e0a100;left:1511.0px;transform:scaleX(0.963);transform-origin:0 0;">В работе</span>
<span class="t" style="top:810.9px;right:719.0px;font-size:22.3px;color:#333;"><span style="">3 000</span><span style="font-size:18.5px;font-weight:400;color:#a6a6a6">.00</span></span>
<span class="t" style="top:810.9px;font-size:22.3px;color:#333;font-weight:700;right:524.3px;">–</span>
<span class="t" style="top:810.9px;right:329.0px;font-size:22.3px;color:#1a9e58;"><span style="-webkit-text-stroke:0.3px #1a9e58;">3 000</span><span style="font-size:18.5px;font-weight:400;color:#8fd3ae">.00</span></span>
<span class="t" style="top:810.9px;font-size:22.3px;color:#1a9e58;-webkit-text-stroke:0.4px #1a9e58;right:133.0px;transform:scaleX(0.971);transform-origin:100% 0;">100.0%</span>
<div class="b" style="left:2502.5px;top:807.1px;width:5.8px;height:5.8px;background:#b4b4b4;border-radius:50%"></div><div class="b" style="left:2502.5px;top:819.4px;width:5.8px;height:5.8px;background:#b4b4b4;border-radius:50%"></div><div class="b" style="left:2502.5px;top:831.7px;width:5.8px;height:5.8px;background:#b4b4b4;border-radius:50%"></div>
<div class="cb" style="left:629.5px;top:886.1px;width:34px;height:34px"></div>
<span class="t" style="top:890.4px;font-size:22.5px;color:#333;left:744.0px;">3</span>
<span class="t" style="top:875.4px;font-size:22.8px;color:#262626;-webkit-text-stroke:0.15px #262626;left:1212.0px;transform:scaleX(1.013);transform-origin:0 0;">01 дек '25</span><span class="t" style="top:908.0px;font-size:20px;color:#a0a0a0;left:1212.0px;transform:scaleX(1.050);transform-origin:0 0;">01 дек '25</span>
<div class="b" style="left:1503.0px;top:883.7px;width:107.0px;height:39.2px;background:#fdf5e6;border-radius:6px"></div><span class="t" style="top:891.4px;font-size:22.8px;color:#e0a100;-webkit-text-stroke:0.4px #e0a100;left:1511.0px;transform:scaleX(0.963);transform-origin:0 0;">В работе</span>
<span class="t" style="top:891.8px;right:719.0px;font-size:22.3px;color:#333;"><span style="">5 000</span><span style="font-size:18.5px;font-weight:400;color:#a6a6a6">.00</span></span>
<span class="t" style="top:891.8px;font-size:22.3px;color:#333;font-weight:700;right:524.3px;">–</span>
<span class="t" style="top:891.8px;right:329.0px;font-size:22.3px;color:#1a9e58;"><span style="-webkit-text-stroke:0.3px #1a9e58;">5 000</span><span style="font-size:18.5px;font-weight:400;color:#8fd3ae">.00</span></span>
<span class="t" style="top:891.8px;font-size:22.3px;color:#1a9e58;-webkit-text-stroke:0.4px #1a9e58;right:133.0px;transform:scaleX(0.971);transform-origin:100% 0;">100.0%</span>
<div class="b" style="left:2502.5px;top:888.6px;width:5.8px;height:5.8px;background:#b4b4b4;border-radius:50%"></div><div class="b" style="left:2502.5px;top:900.9px;width:5.8px;height:5.8px;background:#b4b4b4;border-radius:50%"></div><div class="b" style="left:2502.5px;top:913.2px;width:5.8px;height:5.8px;background:#b4b4b4;border-radius:50%"></div>
<div class="b" style="left:1225.0px;top:149.0px;width:427.5px;height:71.0px;border:2.500px solid #2098b0;border-radius:10px;background:#fff"></div>
<div class="b" style="left:1237.5px;top:147.0px;width:215.5px;height:6.0px;background:#fff"></div>
<span class="t" style="top:136.2px;font-size:16.6px;color:#2098b0;-webkit-text-stroke:0.3px #2098b0;left:1245.2px;transform:scaleX(1.051);transform-origin:0 0;">Показатель для анализа</span>
<span class="t" style="top:169.2px;font-size:25.5px;color:#2e2e2e;-webkit-text-stroke:0.25px #2e2e2e;left:1246.6px;transform:scaleX(0.969);transform-origin:0 0;">Прибыль методом начислен...</span>
<svg style="left:1620.500px;top:181px" width="13" height="7" viewBox="0 0 13 7"><path d="M0.500 6.500 H12.500 L6.500 0.500 Z" fill="#8a8a8a"/></svg>
<div class="b" style="left:1225.0px;top:231.0px;width:427.5px;height:189.5px;background:#fff;border-radius:7px;box-shadow:0 8px 22px rgba(0,0,0,.17),0 3px 8px rgba(0,0,0,.11)"></div>
<span class="t" style="top:256.2px;font-size:22.6px;color:#2e2e2e;-webkit-text-stroke:0.25px #2e2e2e;left:1245.5px;transform:scaleX(1.051);transform-origin:0 0;">Денежный поток</span>
<span class="t" style="top:313.1px;font-size:22.6px;color:#2e2e2e;-webkit-text-stroke:0.25px #2e2e2e;left:1245.5px;transform:scaleX(1.033);transform-origin:0 0;">Прибыль кассовым методом</span>
<span class="t" style="top:371.6px;font-size:22.6px;color:#2e2e2e;-webkit-text-stroke:0.25px #2e2e2e;left:1245.5px;transform:scaleX(1.022);transform-origin:0 0;">Прибыль методом начисления</span>
<svg style="left:1612px;top:372px" width="24" height="20" viewBox="0 0 24 20"><path d="M2.500 10.500 L4.800 8.200 L9 12.500 L18.500 2.800 L20.800 5 L9 17 Z" fill="#222"/></svg>
<div class="b" style="left:1212.7px;top:125.3px;width:453.5px;height:316.2px;border:3.800px solid #ff4500;border-radius:9px"></div>
</body></html>
